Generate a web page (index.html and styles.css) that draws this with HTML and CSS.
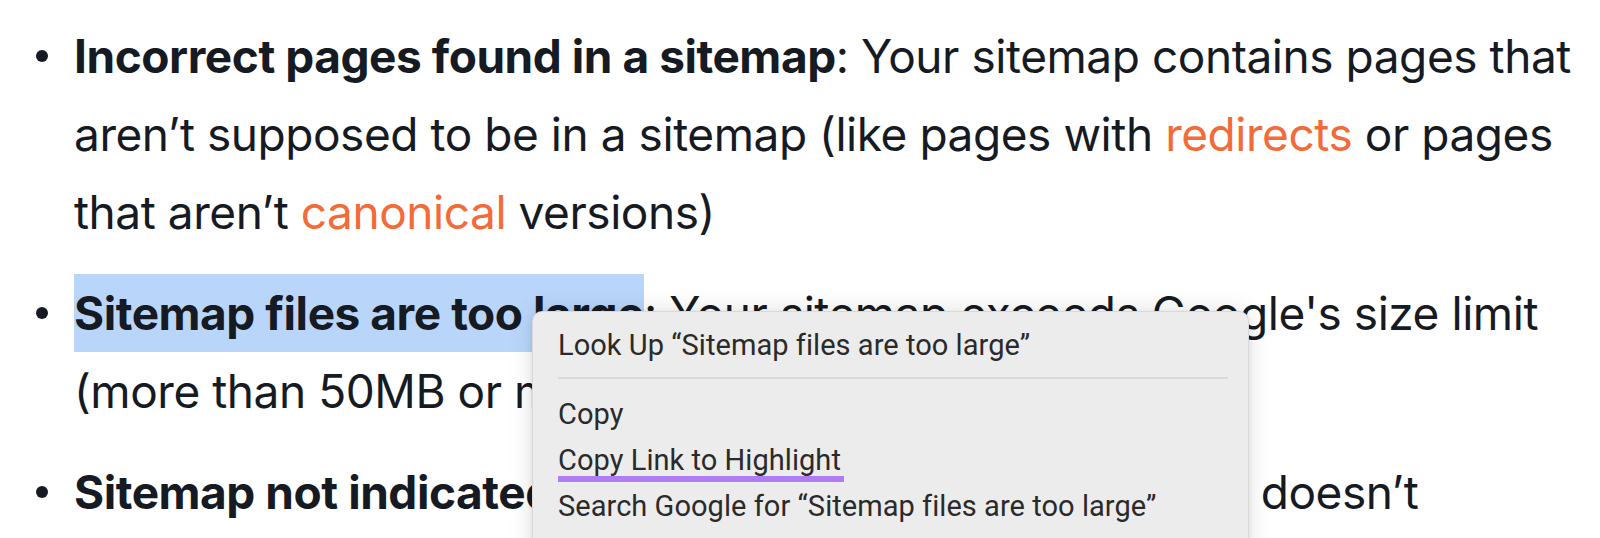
FILE: index.html
```html
<!DOCTYPE html>
<html lang="en">
<head>
<meta charset="utf-8">
<title>Sitemap issues</title>
<link rel="stylesheet" href="styles.css">
</head>
<body>
<main class="page">
  <ul class="issues">
    <li class="issue"><p class="issue-text"><strong>Incorrect pages found in a sitemap</strong>: Your sitemap contains pages that aren’t supposed to be in a sitemap (like pages with <a class="link" href="#">redirects</a> or pages that aren’t <a class="link" href="#">canonical</a> versions)</p></li>
    <li class="issue"><p class="issue-text"><strong class="selected">Sitemap files are too large</strong>: Your sitemap exceeds Google's size limit (more than 50MB or more than 50,000 URLs)</p></li>
    <li class="issue"><p class="issue-text"><strong>Sitemap not indicated in robots.txt</strong>: Your robots.txt file doesn’t reference your sitemap</p></li>
  </ul>

  <div class="context-menu">
    <div class="menu-item">Look Up “Sitemap files are too large”</div>
    <div class="menu-sep"></div>
    <div class="menu-item">Copy</div>
    <div class="menu-item"><span class="marked">Copy Link to Highlight</span></div>
    <div class="menu-item">Search Google for “Sitemap files are too large”</div>
  </div>
</main>
</body>
</html>
```

FILE: styles.css
```css
* { box-sizing: border-box; }

html, body {
  margin: 0;
  padding: 0;
  background: #ffffff;
}

.page {
  position: relative;
  width: 1600px;
  height: 538px;
  overflow: hidden;
  font-family: "Inter", "Noto Sans", sans-serif;
  color: #161a22;
}

.issues {
  list-style: none;
  margin: 0;
  padding: 17px 10px 0 0;
}

.issue {
  display: grid;
  grid-template-columns: 74px 1fr;
  margin: 0 0 23px 0;
}

.issue::before {
  content: "";
  width: 12px;
  height: 12px;
  border-radius: 50%;
  background: #161a22;
  margin: 33px 0 0 36px;
}

.issue-text {
  margin: 0;
  font-size: 46px;
  line-height: 78px;
  letter-spacing: -0.45px;
}

.issue-text strong {
  font-weight: 700;
}

.link {
  color: #f26b38;
  text-decoration: none;
}

.selected {
  background: #b9d6fa;
  padding: 11px 0;
}

.context-menu {
  position: absolute;
  left: 532px;
  top: 311px;
  width: 717px;
  height: 260px;
  background: #ececec;
  border: 1px solid rgba(0, 0, 0, 0.08);
  border-radius: 10px;
  box-shadow: 0 0 24px rgba(0, 0, 0, 0.12), 0 2px 6px rgba(0, 0, 0, 0.08);
  padding: 10px 20px 0 25px;
  font-family: "Roboto", "Inter", sans-serif;
  font-size: 29px;
  letter-spacing: 0.05px;
  color: #2a2a2a;
}

.menu-item {
  height: 46px;
  line-height: 46px;
  white-space: nowrap;
}

.menu-sep {
  height: 2px;
  background: #d9d9d9;
  margin: 9px 0 12px 0;
}

.marked {
  position: relative;
}

.marked::after {
  content: "";
  position: absolute;
  left: 0;
  right: -3px;
  bottom: -5px;
  height: 6px;
  background: #b07cf4;
}
```
